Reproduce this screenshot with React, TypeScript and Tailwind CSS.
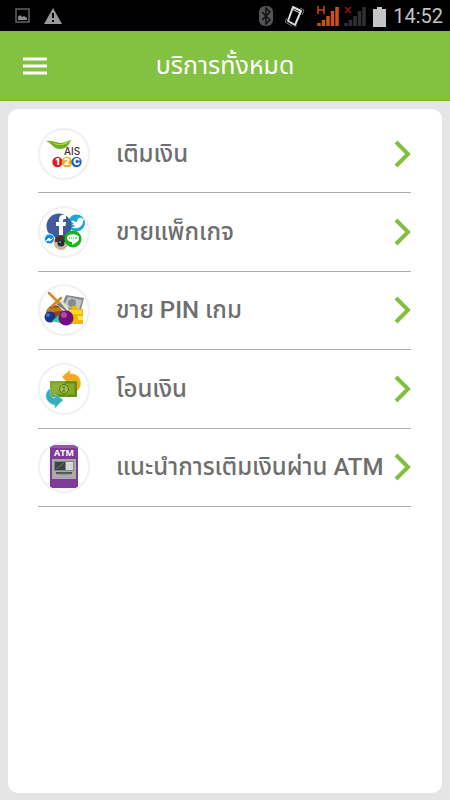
import type { ReactNode } from 'react';

function AisIcon() {
  return (
    <svg viewBox="2 2 48 48" className="size-full font-[Inter]" aria-hidden="true">
      <path d="M8 13c6-1 10 2 15 2 4 0 7-3 10-3-2 5-5 9-11 9-7 0-8-6-14-8Z" fill="#72ad20" />
      <path d="M8 13c7 0 10 4 16 3 4-1 6-3 9-4-3 3-6 5-11 5-6 0-8-4-14-4Z" fill="#c3d84b" />
      <text x="26" y="27" fontSize="10" fontWeight="500" fill="#4b302d">AIS</text>
      <circle cx="19.500" cy="34" r="5.200" fill="#e41b1c" />
      <circle cx="29" cy="34" r="5.200" fill="#f7a81c" />
      <circle cx="38.500" cy="34" r="5.200" fill="#2463bb" />
      <g fill="#fff" fontSize="9" fontWeight="900" textAnchor="middle">
        <text x="19.500" y="37">1</text>
        <text x="29" y="37">2</text>
        <text x="38.500" y="37">C</text>
      </g>
    </svg>
  );
}

function SocialIcon() {
  return (
    <svg viewBox="2 2 48 48" className="size-full" aria-hidden="true">
      <circle cx="38.500" cy="17" r="8.500" fill="#17a9d8" />
      <path d="M33 13c2 2 4 3 6 3 0-5 4-5 6-3l2-1-2 3c0 6-6 9-12 6 2 0 3 0 4-1l-3-2h2l-3-3h2l-2-2Z" fill="#fff" />
      <circle cx="21" cy="20" r="12.500" fill="#3f5b9b" />
      <path d="M21 29v-9h-3v-4h3v-2c0-4 2-6 7-5v4c-3 0-3 0-3 3h3l-.5 4H25v9Z" fill="#fff" />
      <circle cx="23" cy="37" r="7" fill="#c9b49c" />
      <path d="M16.500 34c1-5 10-6 13 0v2h-13Z" fill="#4b3328" />
      <circle cx="23" cy="37" r="3.500" fill="#252b38" />
      <circle cx="22" cy="36" r="1" fill="#8097b4" />
      <circle cx="11.500" cy="33" r="5" fill="#1388f4" stroke="#eef7ff" />
      <path d="m8 35 3-3 2 2 2-2-3 3-2-1Z" fill="#fff" stroke="#fff" />
      <circle cx="35" cy="33" r="8.500" fill="#13b619" />
      <path d="M29 32c0-5 12-5 12 0 0 4-4 5-7 7v-3c-3 0-5-2-5-4Z" fill="#fff" />
      <path d="M31 32h1m1 0h1m1 0h1m1 0h2" stroke="#13a619" />
    </svg>
  );
}

function GameIcon() {
  return (
    <svg viewBox="2 2 48 48" className="size-full" aria-hidden="true">
      <path d="m28 11 18 3-4 15-20-4Z" fill="#85898a" />
      <path d="m30 13 14 3-3 10-15-4Z" fill="#c1c6c6" />
      <circle cx="34" cy="19" r="4" fill="#858b8e" />
      <path d="M8 30c0-9 12-12 18-4l3 10H10Z" fill="#8b4d13" />
      <path d="m10 24 15-1 3 3-19 3Z" fill="#c27a1d" />
      <path d="m17 18 7-2 6 7 4 9-10-6Z" fill="#dce0e0" />
      <path d="m18 20 4-2 10 12Z" fill="#777f83" />
      <path d="M11 9l10 10m-7 3 9-8" stroke="#d28b29" strokeWidth="2.500" strokeLinecap="round" />
      <path d="M30 25h4v-3h5v3h6v15H30Z" fill="#efb900" />
      <path d="M31 26h13v4H31Z" fill="#ffd826" />
      <path d="M40 32h5v4h-5Z" fill="#ffe55e" />
      <circle cx="12" cy="33" r="5.500" fill="#183690" />
      <circle cx="10" cy="31" r="2" fill="#4b72ce" />
      <path d="m14 37 8-7 4 10Z" fill="#38c999" />
      <circle cx="28" cy="34" r="7.500" fill="#711178" />
      <circle cx="26" cy="31" r="3" fill="#b346af" />
    </svg>
  );
}

function TransferIcon() {
  return (
    <svg viewBox="2 2 48 48" className="size-full" aria-hidden="true">
      <path d="m24 14 8-7v4c10-2 15 12 6 18 2-7 0-11-6-11v4Z" fill="#efa91e" stroke="#ffd668" strokeWidth=".7" />
      <path d="M12 18h27v16H12Z" fill="#6c9417" />
      <path d="M14 20h23v12H14Z" fill="#86a92b" stroke="#587e13" strokeWidth=".7" />
      <path d="M12 18h16l-13 16h-3Z" fill="#96b341" opacity=".6" />
      <circle cx="26" cy="26" r="4.500" fill="#a1bd4e" stroke="#557a14" />
      <path d="M26 23v6m-2-5h3m-3 4h3" stroke="#5f841a" />
      <path d="M13 25c-8 5-6 15 4 17v3l8-8-8-6v4c-5 0-5-5-4-10Z" fill="#36aebb" stroke="#79d2d8" strokeWidth=".7" />
    </svg>
  );
}

function AtmIcon() {
  return (
    <svg viewBox="2 2 48 48" className="size-full font-[Open_Sans]" aria-hidden="true">
      <path d="M12 4h28v43H12Z" fill="#7e3b98" />
      <path d="M12 4h28v3H12Z" fill="#9b52b5" />
      <text x="26" y="15" textAnchor="middle" fontSize="9" fontWeight="700" fill="#fff">ATM</text>
      <path d="M14 18h24v20H14Z" fill="#aaa" />
      <path d="M16 20h20v10H16Z" fill="#858585" />
      <path d="M17 21h10v8H17Z" fill="#3e4346" />
      <path d="m18 28 8-6" stroke="#6c7375" />
      <path d="M28 21h7v8h-7Z" fill="#e0e1e1" />
      <path d="M28 24h7m-7 3h7m-5-6v8m3-8v8" stroke="#bfc2c3" strokeWidth=".5" />
      <path d="M18 32h16" stroke="#505050" strokeWidth="2" />
      <path d="M20 33h12" stroke="#777" />
    </svg>
  );
}

function StatusBar() {
  return (
    <div className="flex h-[31px] items-center justify-between bg-black pr-[7px] pl-[15px] text-[#c4c4c4]">
      <div className="flex items-center gap-[14px]">
        <svg width="15" height="15" viewBox="0 0 15 15" fill="none" aria-label="Image">
          <path d="M1 1h13v13H1Z" stroke="#626262" strokeWidth="1.500" />
          <path d="M3 12V9l2-2 2 2 2-1 3 2v2Z" fill="#8b8b8b" />
        </svg>
        <svg width="18" height="16" viewBox="0 0 18 16" aria-label="Warning">
          <path d="m9 0 9 16H0Z" fill="#999" />
          <path d="M8 5h2v5H8Zm0 7h2v2H8Z" fill="#000" />
        </svg>
      </div>
      <div className="flex items-center">
        <svg width="134" height="25" viewBox="0 0 134 25" fill="none" aria-label="Bluetooth, vibrate, mobile signal and battery">
          <rect x="0" y="3" width="14" height="20" rx="6" fill="#555" />
          <path d="m3 9 8 8-4 4V5l4 4-8 8" stroke="#111" strokeWidth="1.500" />
          <path d="m34 4 8 4-6 14-7-4Z" stroke="#ddd" strokeWidth="2" strokeLinejoin="round" />
          <path d="m33 6 8 4" stroke="#ddd" />
          <path d="m28 15-2 4 7 4m2 0 3 0m5-11 2-5-4-2" stroke="#777" />
          <path d="M59 3v8m6-8v8m-6-4h6" stroke="#c74b13" strokeWidth="1.500" />
          <path d="M60 23v-3m4.500 3v-6m4.500 6V13m4.500 10V8m4.500 15V4" stroke="#cc5314" strokeWidth="3.500" />
          <path d="m86 4 6 6m0-6-6 6" stroke="#a30c14" strokeWidth="1.500" />
          <path d="M87 23v-3m4.500 3v-6m4.500 6V13m4.500 10V8m4.500 15V4" stroke="#303030" strokeWidth="3.500" />
          <path d="M114 6h4V4h5v2h4v18h-13Z" fill="#c4c4c4" />
        </svg>
        <time className="font-[Roboto] text-[20px] leading-[30px]">14:52</time>
      </div>
    </div>
  );
}

const services: { label: string; icon: ReactNode }[] = [
  { label: 'เติมเงิน', icon: <AisIcon /> },
  { label: 'ขายแพ็กเกจ', icon: <SocialIcon /> },
  { label: 'ขาย PIN เกม', icon: <GameIcon /> },
  { label: 'โอนเงิน', icon: <TransferIcon /> },
  { label: 'แนะนำการเติมเงินผ่าน ATM', icon: <AtmIcon /> },
];

export default function App() {
  return (
    <div className="flex min-h-screen flex-col bg-[#e5e5e5] font-['Roboto','Noto_Sans_Thai',sans-serif]">
      <StatusBar />
      <header className="grid h-[70px] grid-cols-[70px_1fr_70px] items-center border-b border-[#75b52e] bg-[#82c141] text-white">
        <button type="button" aria-label="Menu" className="flex h-full items-center pl-[23px]">
          <svg width="24" height="18" viewBox="0 0 24 18" aria-hidden="true">
            <path d="M0 2h24M0 9h24M0 16h24" stroke="#fff" strokeWidth="3" />
          </svg>
        </button>
        <h1 className="text-center text-[25px] leading-8 font-normal">บริการทั้งหมด</h1>
      </header>
      <main className="flex flex-1 px-2 pt-2 pb-[7px]">
        <div className="flex-1 rounded-[10px] bg-white pt-[6px] pr-[31px] pl-[30px]">
          <ul className="grid h-[392px] auto-rows-fr">
            {services.map(({ label, icon }) => (
              <li key={label} className="border-b border-[#adadad]">
                <button type="button" className="flex h-full w-full items-center text-left text-[#6e6e6e]">
                  <span className="size-[52px] shrink-0 overflow-hidden rounded-full border-2 border-[#f0f1f2] bg-white">{icon}</span>
                  <span className="min-w-0 flex-1 pl-[26px] text-[24px] leading-8 font-medium whitespace-nowrap">{label}</span>
                  <svg width="17" height="28" viewBox="0 0 17 28" fill="none" className="shrink-0" aria-hidden="true">
                    <path d="m2 2 12 12L2 26" stroke="#80c03e" strokeWidth="4" />
                  </svg>
                </button>
              </li>
            ))}
          </ul>
        </div>
      </main>
    </div>
  );
}
